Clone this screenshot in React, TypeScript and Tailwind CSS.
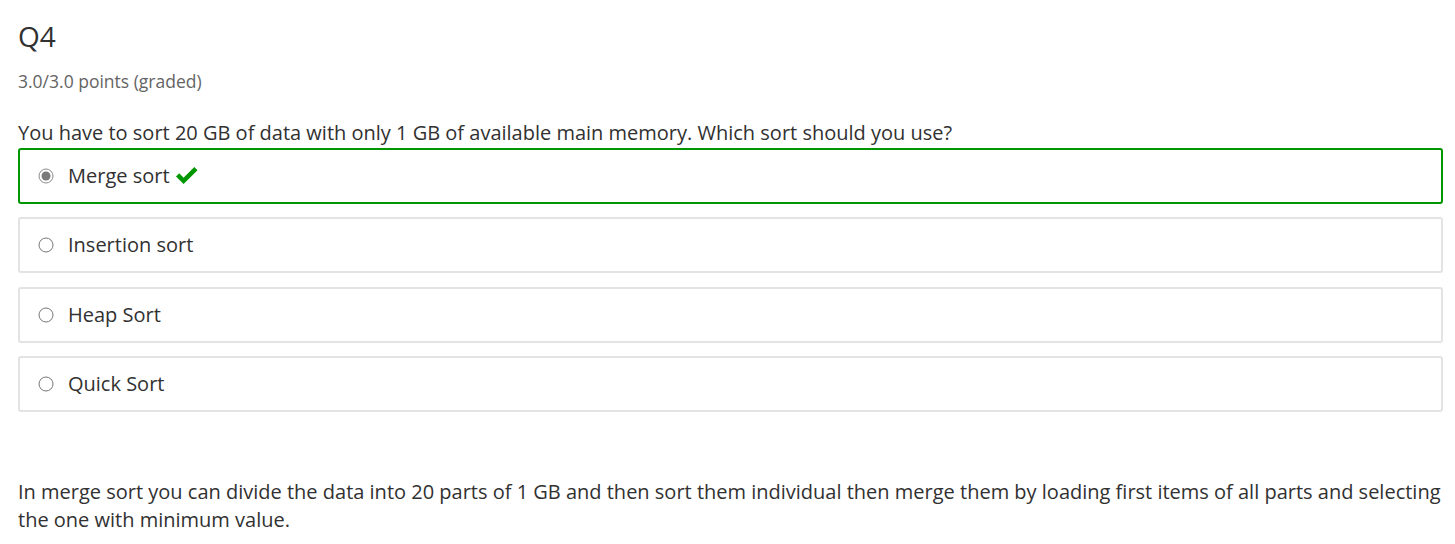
import React from 'react';

type Choice = {
  label: string;
  selected?: boolean;
  correct?: boolean;
};

const choices: Choice[] = [
  { label: 'Merge sort', selected: true, correct: true },
  { label: 'Insertion sort' },
  { label: 'Heap Sort' },
  { label: 'Quick Sort' },
];

const Radio: React.FC<{ checked?: boolean }> = ({ checked }) => (
  <svg width="16" height="16" viewBox="0 0 16 16" className="shrink-0">
    <circle cx="8" cy="8" r="7" fill="#ffffff" stroke={checked ? '#8a8a8a' : '#767676'} strokeWidth="1" />
    {checked && <circle cx="8" cy="8" r="4.5" fill="#7a7a7a" />}
  </svg>
);

const CheckMark: React.FC = () => (
  <svg width="22" height="18" viewBox="0 0 22 18" className="ml-[6px] shrink-0">
    <polygon points="0,9.5 3.2,6.3 7.6,10.7 18.3,0 21.5,3.2 7.6,17.1" fill="#009600" />
  </svg>
);

export default function App() {
  return (
    <div className="min-h-screen bg-white pl-[18px] pr-[12px] pt-[19px] text-[#313131] font-['Open_Sans',sans-serif]">
      <h3 className="text-[28px] leading-[34px] font-normal text-[#313131]">Q4</h3>
      <div className="mt-[16px] text-[17.5px] leading-[24px] text-[#646464]">3.0/3.0 points (graded)</div>

      <p className="mt-[26px] text-[20px] leading-[28px]">
        You have to sort 20 GB of data with only 1 GB of available main memory. Which sort should you use?
      </p>

      <div className="mt-[0.5px] flex flex-col gap-[13.5px]">
        {choices.map((c) => (
          <label
            key={c.label}
            className={
              c.correct
                ? 'flex h-[56px] items-center rounded-[3px] border-2 border-[#009600] pl-[18px]'
                : 'flex h-[56px] items-center rounded-[3px] border-2 border-[#e3e3e3] pl-[18px]'
            }
          >
            <Radio checked={c.selected} />
            <span className="ml-[14px] text-[20px] leading-[28px]">{c.label}</span>
            {c.correct && <CheckMark />}
          </label>
        ))}
      </div>

      <p className="mt-[66px] text-[20px] leading-[28px]">
        In merge sort you can divide the data into 20 parts of 1 GB and then sort them individual then merge them by loading first items of all parts and selecting the one with minimum value.
      </p>
    </div>
  );
}
